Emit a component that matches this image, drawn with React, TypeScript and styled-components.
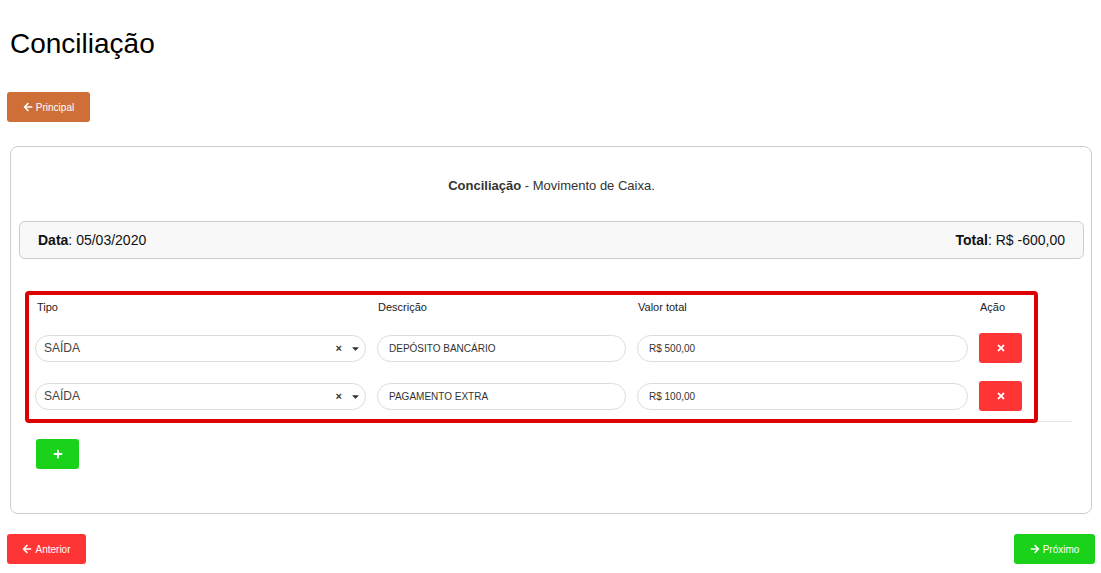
import React from "react";
import styled, { createGlobalStyle } from "styled-components";
import { FaArrowLeft, FaArrowRight, FaTimes, FaPlus, FaCaretDown } from "react-icons/fa";

const Global = createGlobalStyle`
  html, body { margin: 0; padding: 0; background: #fff; }
  body { font-family: "Liberation Sans", Arial, sans-serif; color: #111; }
  * { box-sizing: border-box; }
`;

const Page = styled.div`
  padding: 0 6px 10px 7px;
  width: 1101px;
`;

const Title = styled.h1`
  margin: 0;
  padding: 26px 0 0 3px;
  font-size: 28px;
  font-weight: 400;
  line-height: 36px;
  color: #000;
`;

const Btn = styled.button<{ $bg: string; $w: number }>`
  display: inline-flex;
  align-items: center;
  justify-content: center;
  gap: 3px;
  width: ${(p) => p.$w}px;
  height: 30px;
  padding: 0;
  border: none;
  border-radius: 3px;
  background: ${(p) => p.$bg};
  color: #fff;
  font-family: "Liberation Sans", Arial, sans-serif;
  font-size: 10px;
  cursor: pointer;
  svg { font-size: 10px; }
`;

const TopBar = styled.div`
  margin-top: 30px;
  height: 30px;
`;

const Card = styled.div`
  margin: 24px 3px 0 3px;
  border: 1px solid #ccc;
  border-radius: 8px;
  padding: 31px 7px 44px 8px;
`;

const Subtitle = styled.div`
  text-align: center;
  font-size: 13px;
  color: #333;
  line-height: 16px;
  b { font-weight: 700; }
`;

const DataBar = styled.div`
  margin-top: 27px;
  height: 38px;
  display: flex;
  align-items: center;
  justify-content: space-between;
  padding: 0 18px 0 18px;
  background: #f8f8f8;
  border: 1px solid #ccc;
  border-radius: 6px;
  font-size: 14px;
  color: #111;
  b { font-weight: 700; }
`;

const TableWrap = styled.div`
  position: relative;
  margin: 36px 12px 0 10px;
  border-bottom: 1px solid #e4e4e4;
`;

const RedFrame = styled.div`
  position: absolute;
  left: -4px;
  top: -4px;
  width: 1013px;
  height: 132px;
  border: 4px solid #dd0000;
  border-radius: 4px;
  pointer-events: none;
`;

const Grid = styled.div`
  display: grid;
  grid-template-columns: 331px 249px 331px 1fr;
  column-gap: 11px;
  padding-left: 6px;
  align-items: center;
`;

const HeadRow = styled(Grid)`
  height: 30px;
  align-items: start;
  padding-top: 6px;
  font-size: 11px;
  color: #222;
  line-height: 13px;
`;

const HeadCell = styled.div<{ $ml?: number }>`
  margin-left: ${(p) => p.$ml ?? 0}px;
`;

const Row = styled(Grid)`
  height: 48px;
  padding-top: 8px;
  padding-bottom: 10px;
`;

const SelectBox = styled.div`
  height: 27px;
  border: 1px solid #dcdcdc;
  border-radius: 14px;
  display: flex;
  align-items: center;
  padding: 0 4px 0 8px;
  font-size: 12px;
  color: #444;
  span.v { flex: 1; }
  span.x { font-size: 11px; font-weight: 700; color: #333; margin-right: 8px; }
  svg { color: #333; font-size: 11px; }
`;

const Input = styled.div`
  height: 27px;
  border: 1px solid #dcdcdc;
  border-radius: 14px;
  display: flex;
  align-items: center;
  padding: 0 11px;
  font-size: 10px;
  color: #333;
`;

const AddWrap = styled.div`
  margin: 17px 0 0 17px;
`;

const Footer = styled.div`
  margin-top: 20px;
  display: flex;
  justify-content: space-between;
`;

const rows = [
  { desc: "DEPÓSITO BANCÁRIO", valor: "R$ 500,00" },
  { desc: "PAGAMENTO EXTRA", valor: "R$ 100,00" },
];

export default function App() {
  return (
    <>
      <Global />
      <Page>
        <Title>Conciliação</Title>
        <TopBar>
          <Btn $bg="#cd6f37" $w={83}>
            <FaArrowLeft /> Principal
          </Btn>
        </TopBar>
        <Card>
          <Subtitle>
            <b>Conciliação</b> - Movimento de Caixa.
          </Subtitle>
          <DataBar>
            <span>
              <b>Data</b>: 05/03/2020
            </span>
            <span>
              <b>Total</b>: R$ -600,00
            </span>
          </DataBar>
          <TableWrap>
            <HeadRow>
              <HeadCell $ml={2}>Tipo</HeadCell>
              <HeadCell $ml={1}>Descrição</HeadCell>
              <HeadCell $ml={1}>Valor total</HeadCell>
              <HeadCell $ml={1}>Ação</HeadCell>
            </HeadRow>
            {rows.map((r) => (
              <Row key={r.desc}>
                <SelectBox>
                  <span className="v">SAÍDA</span>
                  <span className="x">×</span>
                  <FaCaretDown />
                </SelectBox>
                <Input>{r.desc}</Input>
                <Input>{r.valor}</Input>
                <div>
                  <Btn $bg="#ff3535" $w={43}>
                    <FaTimes />
                  </Btn>
                </div>
              </Row>
            ))}
            <RedFrame />
          </TableWrap>
          <AddWrap>
            <Btn $bg="#1ad21a" $w={43}>
              <FaPlus />
            </Btn>
          </AddWrap>
        </Card>
        <Footer>
          <Btn $bg="#ff3535" $w={79}>
            <FaArrowLeft /> Anterior
          </Btn>
          <Btn $bg="#1ad21a" $w={81}>
            <FaArrowRight /> Próximo
          </Btn>
        </Footer>
      </Page>
    </>
  );
}
